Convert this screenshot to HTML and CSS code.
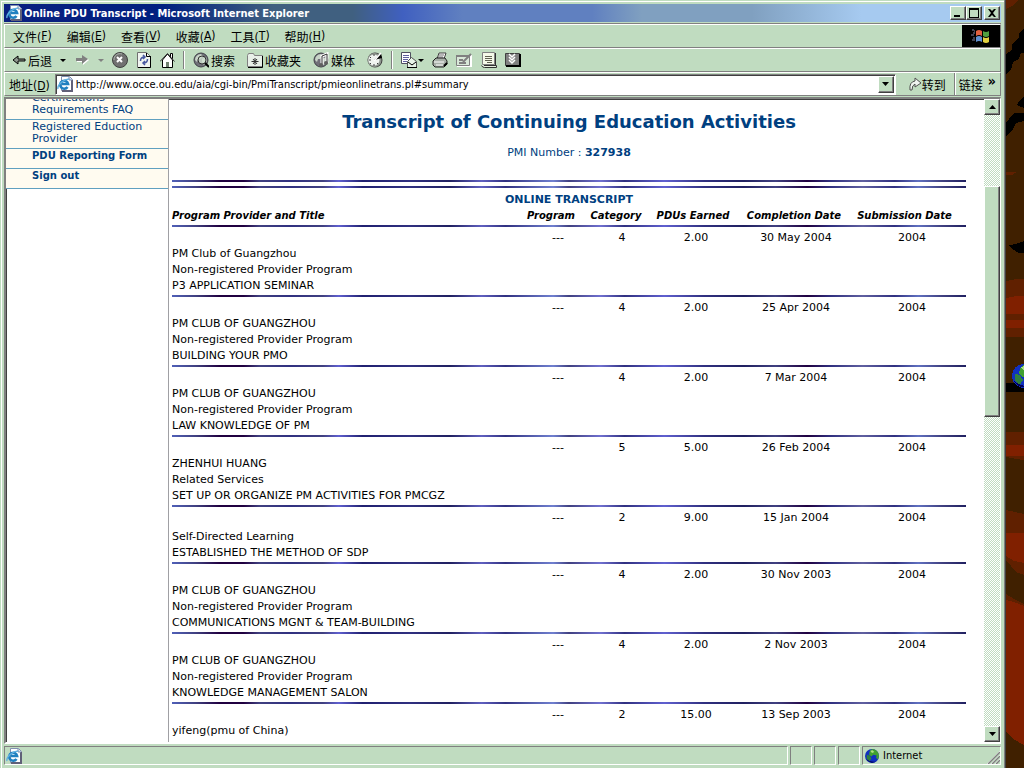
FILE: index.html
```
<!DOCTYPE html>
<html lang="zh-CN">
<head>
    <meta charset="utf-8">
    <title>Online PDU Transcript - Microsoft Internet Explorer</title>
    <link rel="stylesheet" href="styles.css">
</head>
<body>
    <!-- shared icons -->
    <svg class="defs" width="0" height="0">
        <symbol id="ie" viewBox="0 0 16 16">
            <path d="M4.500 .5h8l3 3v11h-11z" fill="#fff" stroke="#8090b0"/>
            <path d="M15 4v11H5" fill="none" stroke="#606078" stroke-width="2"/>
            <path d="M12 1v3h3" fill="#c0d8f0" stroke="#8090b0"/>
            <path d="M10.500 11a4 4 0 1 1 .6-3H5" fill="none" stroke="#2080c0" stroke-width="2.6"/>
            <path d="M1 13C0 9 7 3 12 3" fill="none" stroke="#60b0e0" stroke-width="1.4"/>
        </symbol>
        <symbol id="globe" viewBox="0 0 16 16">
            <circle cx="8" cy="8" r="7" fill="#707078" stroke="#404048"/>
            <path d="M2 8a6 6 0 0 1 6-6l2 2-3 3-2 0-1 3zM9 7l4-2 1 4-3 4-2-3z" fill="#c8d4c8"/>
        </symbol>
        <symbol id="earth" viewBox="0 0 24 24">
            <circle cx="12" cy="12" r="12" fill="#1030c0"/>
            <path d="M12 0a12 12 0 0 1 12 12l-2 6-3-3 1-4-6-1-3 3-4-3 1-6z" fill="#40a030"/>
            <path d="M3 10l5 1 3 5-3 5-5-4z" fill="#308040"/>
            <path d="M9 3l4-1 3 3-4 2z" fill="#b0e080"/>
            <path d="M2 17a12 12 0 0 0 18 4q-10 3-18-4z" fill="#000060"/>
        </symbol>
    </svg>

    <div class="window">
        <div class="titlebar">
            <svg class="icon"><use href="#ie"/></svg>
            <h1>Online PDU Transcript - Microsoft Internet Explorer</h1>
            <button class="caption" aria-label="Minimize"><svg width="10" height="10"><path d="M1 7h6v2H1z"/></svg></button>
            <button class="caption" aria-label="Maximize"><svg width="10" height="10"><path d="M0 0h10v10H0zM1 2v7h8V2z" fill-rule="evenodd"/></svg></button>
            <button class="caption close" aria-label="Close"><svg width="8" height="8"><path d="M0 0h2l2 2 2-2h2L5 4l3 4H6L4 6 2 8H0l3-4z"/></svg></button>
        </div>

        <div class="bars">
            <div class="bar menu">
                <button>文件(<u>F</u>)</button>
                <button>编辑(<u>E</u>)</button>
                <button>查看(<u>V</u>)</button>
                <button>收藏(<u>A</u>)</button>
                <button>工具(<u>T</u>)</button>
                <button>帮助(<u>H</u>)</button>
                <div class="throbber">
                    <svg width="20" height="18" viewBox="0 0 20 18">
                        <path d="M5 4q3-2 6 0v5q-3-2-6 0z" fill="#e06040"/>
                        <path d="M12 4q3 2 6 0v5q-3 2-6 0z" fill="#50a040"/>
                        <path d="M5 10q3-2 6 0v5q-3-2-6 0z" fill="#6090d0"/>
                        <path d="M12 10q3 2 6 0v5q-3 2-6 0z" fill="#e0d040"/>
                        <path d="M1 3h2M2 6h2M0 8h3M2 11h2M1 13h3M3 4h1" stroke="#8080a0" stroke-width="1"/>
                    </svg>
                </div>
            </div>

            <div class="bar tools">
                <button class="back"><svg width="14" height="12"><path d="M1 6l5-4v3h7v2H6v3z" fill="#909890" stroke="#000"/></svg>后退</button>
                <button class="drop" aria-label="Back list"><svg width="6" height="3"><path d="M0 0h6L3 3z"/></svg></button>
                <button class="forward" aria-label="Forward"><svg width="14" height="12"><path d="M1 5h6V2l6 4-6 5V8H1z" fill="#fff"/><path d="M0 4h6V1l6 4-6 5V7H0z" fill="#808080"/></svg></button>
                <button class="drop" aria-label="Forward list"><svg width="6" height="3"><path d="M0 0h6L3 3z" fill="#808080"/></svg></button>
                <button class="stop" aria-label="Stop"><svg class="icon"><circle cx="8" cy="8" r="7.500" fill="#707070" stroke="#404040"/><path d="M2 8a6 6 0 0 1 8-6" fill="none" stroke="#b0b8b0"/><path d="M5 5l5 5M10 5l-5 5" stroke="#fff" stroke-width="2"/></svg></button>
                <button class="refresh" aria-label="Refresh"><svg width="14" height="16"><path d="M.5 .5h9l4 4v11H.5z" fill="#f0f4f0" stroke="#707070"/><path d="M13.500 4v11.500H1M9.500 1v3.500h4" fill="none" stroke="#000"/><path d="M3.500 9q0-4 4-4M6 3l2 2-2 2M10.500 7q0 4-4 4M8 9l-2 2 2 2" fill="none" stroke="#4858a0" stroke-width="1.500"/></svg></button>
                <button class="home" aria-label="Home"><svg width="15" height="16"><path d="M10.500 1.500h2v5h-2z" fill="#fff" stroke="#000"/><path d="M2.500 8l5-6 5 6v7.500h-10z" fill="#fff" stroke="#000"/><path d="M0 9.500l7.500-8 7 8" fill="none" stroke="#303030"/><path d="M6 10h3v5H6z" fill="#708070"/></svg></button>
                <span class="sep"></span>
                <button class="search"><svg class="icon"><use href="#globe"/><circle cx="9" cy="8" r="4" fill="#d0e0d0" fill-opacity=".8" stroke="#303030"/><path d="M12 11l4 4" stroke="#000" stroke-width="2"/></svg>搜索</button>
                <button class="favs"><svg class="icon"><path d="M.5 3.500l1-2h5l1 2h8v11H.500z" fill="#e8f0e8" stroke="#808080"/><path d="M15.500 4v11.500H1" fill="none" stroke="#000"/><path d="M8 6v7M4.500 9.500h7M6 7l4 5M10 7l-4 5" stroke="#303030"/></svg>收藏夹</button>
                <button class="media"><svg class="icon"><use href="#globe"/><path d="M9 13V4l5-2v9" fill="none" stroke="#fff" stroke-width="3"/><path d="M9 13V4l5-2v9" fill="none" stroke="#303030"/><circle cx="8" cy="13" r="2" fill="#606060"/><circle cx="13" cy="11" r="2" fill="#606060"/></svg>媒体</button>
                <button class="history" aria-label="History"><svg class="icon"><circle cx="8" cy="8" r="7.500" fill="#404040"/><circle cx="7.500" cy="8" r="7" fill="#909890"/><circle cx="7" cy="8" r="5.500" fill="#f0f4f0"/><path d="M7 8l7-7 1 5z" fill="#000"/><path d="M3 5l1 1M2 8h2M4 11l-1 1M7 12v2M10 11l1 1M7 2v2" stroke="#404040"/><path d="M7 9l7-8" stroke="#fff" stroke-width="1.500"/></svg></button>
                <span class="sep"></span>
                <button class="mail" aria-label="Mail"><svg class="icon"><path d="M.5 .5h9v11h-9z" fill="#fff" stroke="#505060"/><path d="M2 3.500h6M2 5.500h6M2 7.500h5M2 9.500h4" stroke="#6060a0"/><path d="M6.500 9.500l4-4 5 4v6h-9z" fill="#e8f4e8" stroke="#505050"/><path d="M7 10l4 3 4-3M6 15.500h10" fill="none" stroke="#000"/></svg></button>
                <button class="drop" aria-label="Mail list"><svg width="6" height="3"><path d="M0 0h6L3 3z"/></svg></button>
                <button class="print" aria-label="Print"><svg class="icon"><path d="M5 7l2-6h7l-2 6z" fill="#fff" stroke="#404040"/><path d="M7 3h5M6 5h5" stroke="#707070"/><path d="M1 9l3-3h9l2 3v3l-3 3H3l-2-2z" fill="#a8b0a8" stroke="#202020"/><path d="M2 10h10M4 13h7" stroke="#fff"/><path d="M12 14l3-3" stroke="#000" stroke-width="2"/></svg></button>
                <button class="edit" aria-label="Edit"><svg class="icon"><path d="M1 3h15v12H1z" fill="#fff"/><path d="M.5 3.500h13v10H.500z" fill="#d8e8d8" stroke="#808080"/><path d="M0 3h14v2H0z" fill="#808080"/><path d="M3 8h4M3 11h7M7 10l8-8" stroke="#808080" stroke-width="2"/></svg></button>
                <button class="note" aria-label="Discuss"><svg class="icon"><path d="M1.500 .5h12v12h-12z" fill="#f4f8e8" stroke="#808080"/><path d="M14.500 1v12M.5 13.500q1 2 3 2h12v-2H3" fill="#e8f0e0" stroke="#303030"/><path d="M4 4.500h7M4 6.500h7M4 8.500h7M6 10.500h5" stroke="#606050"/></svg></button>
                <button class="book" aria-label="Tools"><svg class="icon"><path d="M.5 1.500h14v12H.500z" fill="#808080" stroke="#404040"/><path d="M15 2v12H1" fill="none" stroke="#000" stroke-width="2"/><path d="M4 2l3 3 3-3M4 5l3 3 3-3M4 8l3 3 3-3" fill="none" stroke="#fff" stroke-width="1.500"/></svg></button>
            </div>

            <div class="bar address">
                <label for="url">地址(<u>D</u>)</label>
                <div class="combo">
                    <svg class="icon"><use href="#ie"/></svg>
                    <input id="url" type="text" value="http://www.occe.ou.edu/aia/cgi-bin/PmiTranscript/pmieonlinetrans.pl#summary">
                    <button class="raised" aria-label="Address list"><svg width="7" height="4"><path d="M0 0h7L3.500 4z"/></svg></button>
                </div>
                <button class="go"><svg width="14" height="14"><path d="M2 13Q1 5 7 4V1l6 5-6 4V7Q4 8 4 13z" fill="#f0f4f0" stroke="#505050"/></svg>转到</button>
                <button class="links">链接 <span>»</span></button>
            </div>
        </div>

        <div class="view">
            <nav class="sidebar">
                <a href="#">Certifications<br>Requirements FAQ</a>
                <a href="#">Registered Eduction<br>Provider</a>
                <a href="#" class="main">PDU Reporting Form</a>
                <a href="#" class="main">Sign out</a>
            </nav>

            <main class="page">
                <h2>Transcript of Continuing Education Activities</h2>
                <p class="number">PMI Number : <b>327938</b></p>
                <div class="rule"></div>
                <div class="rule"></div>
                <table>
                    <caption>ONLINE TRANSCRIPT</caption>
                    <thead>
                        <tr>
                            <th class="title">Program Provider and Title</th>
                            <th class="program">Program</th>
                            <th class="category">Category</th>
                            <th class="pdus">PDUs Earned</th>
                            <th class="completed">Completion Date</th>
                            <th class="submitted">Submission Date</th>
                        </tr>
                    </thead>
                    <tbody>
                        <tr><td colspan="6" class="line"><div class="rule"></div></td></tr>
                        <tr>
                            <td class="title">PM Club of Guangzhou<br>Non-registered Provider Program<br>P3 APPLICATION SEMINAR</td>
                            <td class="program">---</td><td class="category">4</td><td class="pdus">2.00</td><td class="completed">30 May 2004</td><td class="submitted">2004</td>
                        </tr>
                        <tr><td colspan="6" class="line"><div class="rule"></div></td></tr>
                        <tr>
                            <td class="title">PM CLUB OF GUANGZHOU<br>Non-registered Provider Program<br>BUILDING YOUR PMO</td>
                            <td class="program">---</td><td class="category">4</td><td class="pdus">2.00</td><td class="completed">25 Apr 2004</td><td class="submitted">2004</td>
                        </tr>
                        <tr><td colspan="6" class="line"><div class="rule"></div></td></tr>
                        <tr>
                            <td class="title">PM CLUB OF GUANGZHOU<br>Non-registered Provider Program<br>LAW KNOWLEDGE OF PM</td>
                            <td class="program">---</td><td class="category">4</td><td class="pdus">2.00</td><td class="completed">7 Mar 2004</td><td class="submitted">2004</td>
                        </tr>
                        <tr><td colspan="6" class="line"><div class="rule"></div></td></tr>
                        <tr>
                            <td class="title">ZHENHUI HUANG<br>Related Services<br>SET UP OR ORGANIZE PM ACTIVITIES FOR PMCGZ</td>
                            <td class="program">---</td><td class="category">5</td><td class="pdus">5.00</td><td class="completed">26 Feb 2004</td><td class="submitted">2004</td>
                        </tr>
                        <tr><td colspan="6" class="line"><div class="rule"></div></td></tr>
                        <tr class="self">
                            <td class="title">Self-Directed Learning<br>ESTABLISHED THE METHOD OF SDP</td>
                            <td class="program">---</td><td class="category">2</td><td class="pdus">9.00</td><td class="completed">15 Jan 2004</td><td class="submitted">2004</td>
                        </tr>
                        <tr><td colspan="6" class="line"><div class="rule"></div></td></tr>
                        <tr>
                            <td class="title">PM CLUB OF GUANGZHOU<br>Non-registered Provider Program<br>COMMUNICATIONS MGNT &amp; TEAM-BUILDING</td>
                            <td class="program">---</td><td class="category">4</td><td class="pdus">2.00</td><td class="completed">30 Nov 2003</td><td class="submitted">2004</td>
                        </tr>
                        <tr><td colspan="6" class="line"><div class="rule"></div></td></tr>
                        <tr>
                            <td class="title">PM CLUB OF GUANGZHOU<br>Non-registered Provider Program<br>KNOWLEDGE MANAGEMENT SALON</td>
                            <td class="program">---</td><td class="category">4</td><td class="pdus">2.00</td><td class="completed">2 Nov 2003</td><td class="submitted">2004</td>
                        </tr>
                        <tr><td colspan="6" class="line"><div class="rule"></div></td></tr>
                        <tr>
                            <td class="title">yifeng(pmu of China)</td>
                            <td class="program">---</td><td class="category">2</td><td class="pdus">15.00</td><td class="completed">13 Sep 2003</td><td class="submitted">2004</td>
                        </tr>
                    </tbody>
                </table>
            </main>

            <div class="scrollbar">
                <button class="raised" aria-label="Scroll up"><svg width="7" height="4"><path d="M0 4h7L3.500 0z"/></svg></button>
                <div class="track"><div class="thumb raised"></div></div>
                <button class="raised" aria-label="Scroll down"><svg width="7" height="4"><path d="M0 0h7L3.500 4z"/></svg></button>
            </div>
        </div>

        <div class="status">
            <div class="pane message"><svg class="icon"><use href="#ie"/></svg></div>
            <div class="pane"></div>
            <div class="pane"></div>
            <div class="pane"></div>
            <div class="pane zone">
                <svg width="14" height="14"><use href="#earth"/></svg>Internet
                <svg class="grip" width="13" height="13"><path d="M0 13L13 0M4 13l9-9M8 13l5-5" stroke="#fff"/><path d="M1 13L13 1M5 13l8-8M9 13l4-4" stroke="#808080" stroke-width="1.500"/></svg>
            </div>
        </div>
    </div>

    <svg class="desktop" viewBox="0 0 18 768" preserveAspectRatio="none" shape-rendering="crispEdges">
        <path d="M0 0h18v768H0z" fill="#402000"/>
        <path d="M0 0h12l-4 5-8 4zM0 172h11l-5 3H0zM0 281l10-2h8v58H0zM0 432h18v28l-8-1-10-2zM0 510l18 4v61l-8-3-10-12zM0 594l8 5 10 5v8H0z" fill="#602000"/>
        <path d="M0 298l10-2h8v18H0zM0 320h18v8H0zM0 445h18v11H0zM0 533h18v30l-10-2-8-5zM0 600l8 2 10 4v139l-9-5-9-8z" fill="#802000"/>
        <path d="M18 28l-5 5v4l-7 7v6l-6 4v20l5-4 2-8 6-3 2-6h3zM18 97l-5 4-2 4 7 3zM18 113H8l-5 6-3 3v14l6-5 4-8 8-2zM18 241l-5 2-8 2H3l3 4 7 4h5zM0 383h18v9H0z" fill="#000"/>
        <svg x="6" y="364" width="24" height="24"><use href="#earth"/></svg>
    </svg>
</body>
</html>
```
FILE: styles.css
```
* {
    margin: 0;
    padding: 0;
    box-sizing: border-box;
}

body {
    display: flex;
    height: 100vh;
    overflow: hidden;
    background: #402000;
    color: #000;
    font-family: "DejaVu Sans Condensed", "Noto Sans CJK SC", sans-serif;
    font-size: 12px;
}

button {
    display: flex;
    align-items: center;
    border: none;
    background: none;
    font: inherit;
    color: inherit;
    white-space: nowrap;
}

svg {
    display: block;
    flex: none;
}

.defs {
    position: absolute;
}

.icon {
    width: 16px;
    height: 16px;
}

.window {
    flex: 1;
    min-width: 0;
    display: flex;
    flex-direction: column;
    padding: 4px 5px 3px 4px;
    background: #c0dcc0;
    box-shadow: inset -1px 0 #404040, inset -2px 0 #808080, inset 1px 1px #c0dcc0, inset 2px 2px #fff;
}

.desktop {
    flex: none;
    width: 18px;
    height: 100%;
}

/* window chrome */
.titlebar {
    display: flex;
    align-items: center;
    height: 18px;
    padding: 0 1px 0 2px;
    background: linear-gradient(90deg, #0a2080 0%, #002080 16%, #406080 27%, #406080 35%, #4060c0 40%, #6080c0 46%, #6080c0 59%, #80a0c0 64%, #80a0c0 75%, #a6caf0 86%);
}

.titlebar h1 {
    flex: 1;
    padding-left: 2px;
    color: #fff;
    font-size: 11px;
}

.raised, .caption {
    justify-content: center;
    background: #c0dcc0;
    border: 1px solid;
    border-color: #fff #404040 #404040 #fff;
    box-shadow: inset -1px -1px #808080;
}

.caption {
    width: 16px;
    height: 14px;
}

.caption.close {
    margin-left: 2px;
}

.bars {
    margin-top: 1px;
    border-top: 1px solid #808080;
}

.bar {
    display: flex;
    align-items: center;
    height: 24px;
    border: 1px solid;
    border-color: #fff #808080 #808080 #fff;
}

.menu {
    gap: 15px;
    padding-left: 8px;
}

.throbber {
    align-self: stretch;
    display: flex;
    align-items: center;
    justify-content: center;
    width: 38px;
    margin-left: auto;
    background: #000;
}

.tools {
    padding-left: 7px;
}

.back {
    gap: 2px;
}

.drop {
    padding: 0 8px;
}

.forward {
    margin-left: 2px;
}

.refresh, .home, .note {
    margin-left: 9px;
}

.sep {
    width: 2px;
    height: 18px;
    margin: 0 8px;
    border-left: 1px solid #808080;
    border-right: 1px solid #fff;
}

.search, .favs, .media {
    gap: 2px;
    margin-right: 12px;
}

.mail + .drop {
    padding: 0 8px 0 1px;
}

.edit, .book {
    margin-left: 8px;
}

.address {
    padding-left: 4px;
}

.combo {
    flex: 1;
    display: flex;
    align-items: center;
    height: 21px;
    margin-left: 5px;
    padding: 0 1px;
    background: #fff;
    border: 1px solid #404040;
    border-color: #808080 #fff #fff #808080;
    box-shadow: inset 1px 1px #404040;
}

.combo input {
    flex: 1;
    min-width: 0;
    padding-left: 3px;
    border: none;
    outline: none;
    background: none;
    font: 11px "DejaVu Sans Condensed", sans-serif;
}

.combo button {
    width: 16px;
    height: 17px;
}

.go {
    padding: 0 8px 0 12px;
}

.links {
    height: 22px;
    gap: 5px;
    padding: 0 4px;
    border-left: 1px solid #808080;
    box-shadow: inset 1px 0 #fff;
}

.links span {
    align-self: flex-start;
    font-size: 14px;
    font-weight: bold;
}

/* page area */
.view {
    flex: 1;
    min-height: 0;
    display: flex;
    margin-top: 1px;
    background: #fff;
    border: 2px solid;
    border-color: #808080 #fff #fff #808080;
    border-right-width: 1px;
    box-shadow: inset 1px 1px #404040;
    font-family: "DejaVu Sans", sans-serif;
    font-size: 11px;
    overflow: hidden;
}

.sidebar {
    width: 163px;
    border-right: 1px solid #a0a0a4;
    overflow: hidden;
}

.sidebar a {
    display: block;
    padding: 1px 0 3px 26px;
    background: #fffbf0;
    border-bottom: 1px solid #60a0c0;
    color: #004080;
    line-height: 12px;
    text-decoration: none;
}

/* the page is scrolled past the top of the list */
.sidebar a:first-child {
    margin-top: -8px;
}

.sidebar .main {
    padding-bottom: 6px;
    font-size: 10px;
    font-weight: bold;
}

.page {
    flex: 1;
    min-width: 0;
    padding: 11px 18px 0 3px;
    overflow: hidden;
}

.page h2 {
    color: #004080;
    font-size: 18px;
    line-height: 24px;
    text-align: center;
}

.number {
    padding: 11px 0 19px;
    color: #004080;
    line-height: 16px;
    text-align: center;
}

.rule {
    height: 2px;
    background: linear-gradient(90deg, #5060b8 0%, #404080 3%, #200040 6%, #200040 9%, #404080 11%, #303080 15%, #404080 19%, #6060d0 21%, #202070 24%, #303080 30%, #202060 35%, #6060c0 39%, #303080 42%, #7080d0 48%, #404080 50%, #7070d0 54%, #303080 57%, #6060d0 62%, #303080 67%, #202060 72%, #404080 76%, #200040 80%, #303080 83%, #6060a0 87%, #303080 91%, #6070c0 94%, #404080 97%, #202060 100%);
}

.page > .rule {
    margin-bottom: 4px;
}

table {
    width: 100%;
    border-collapse: collapse;
    table-layout: fixed;
}

caption {
    color: #004080;
    font-weight: bold;
    line-height: 16px;
}

th {
    padding-bottom: 1px;
    font-size: 10px;
    font-style: italic;
    line-height: 16px;
    white-space: nowrap;
}

td {
    padding: 3px 0 1px;
    line-height: 16px;
    text-align: center;
    vertical-align: top;
}

td.title {
    padding-top: 19px;
    text-align: left;
    white-space: nowrap;
}

.self td.title {
    padding-top: 22px;
}

td.line {
    padding: 0;
}

th.title {
    text-align: left;
}

th.program { width: 62px; }
th.category { width: 68px; }
th.pdus { width: 86px; }
th.completed { width: 116px; }
th.submitted { width: 114px; padding-right: 9px; }

td.program { padding-left: 14px; }
td.category { padding-left: 12px; }
td.pdus { padding-left: 6px; }
td.completed { padding-left: 4px; }
td.submitted { padding-left: 6px; }

.scrollbar {
    display: flex;
    flex-direction: column;
    width: 16px;
    background: repeating-conic-gradient(#fff 0 25%, #c0dcc0 0 50%) 0 0 / 2px 2px;
}

.scrollbar button {
    height: 16px;
}

.track {
    flex: 1;
    display: flex;
    flex-direction: column;
}

.track::before {
    content: "";
    flex: 71;
}

.track::after {
    content: "";
    flex: 310;
}

.thumb {
    flex: 230;
}

/* status bar */
.status {
    display: flex;
    gap: 2px;
    height: 19px;
    margin-top: 2px;
}

.pane {
    display: flex;
    align-items: center;
    width: 22px;
    border: 1px solid;
    border-color: #808080 #fff #fff #808080;
}

.message {
    flex: 1;
    padding-left: 1px;
}

.zone {
    gap: 4px;
    width: 139px;
    padding-left: 2px;
    font-size: 11px;
}

.grip {
    align-self: flex-end;
    margin-left: auto;
}
```
